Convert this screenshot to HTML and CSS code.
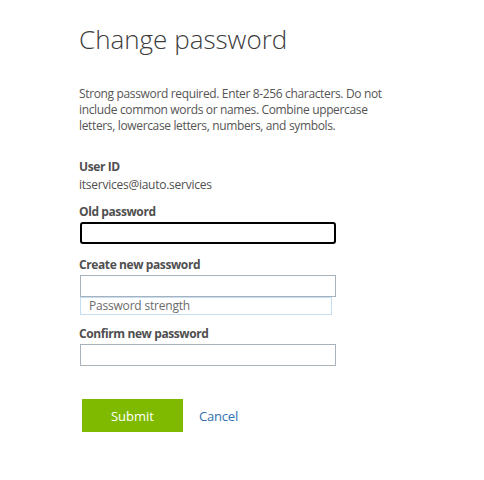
FILE: index.html
```html
<!DOCTYPE html>
<html lang="en">
<head>
<meta charset="utf-8">
<title>Change password</title>
<link rel="stylesheet" href="styles.css">
</head>
<body>
<main class="page">
  <h1 class="title">Change password</h1>
  <p class="desc">Strong password required. Enter 8-256 characters. Do not include common words or names. Combine uppercase letters, lowercase letters, numbers, and symbols.</p>
  <form class="form">
    <div class="label label-first">User ID</div>
    <div class="value">itservices@iauto.services</div>

    <label class="label label-gap-sm" for="old">Old password</label>
    <input class="field field-focus" id="old" type="password">

    <label class="label label-gap-md" for="new">Create new password</label>
    <input class="field" id="new" type="password">
    <div class="strength">Password strength</div>

    <label class="label label-gap-sm" for="confirm">Confirm new password</label>
    <input class="field" id="confirm" type="password">

    <div class="actions">
      <button class="submit" type="button">Submit</button>
      <a class="cancel" href="#">Cancel</a>
    </div>
  </form>
</main>
</body>
</html>
```

FILE: styles.css
```css
html, body {
  margin: 0;
  padding: 0;
  background: #ffffff;
}

body {
  font-family: "Open Sans", "Noto Sans", sans-serif;
  color: #505050;
}

.page {
  padding-left: 79px;
}

.title {
  margin: 21px 0 0 0;
  font-size: 26px;
  line-height: 36px;
  font-weight: 300;
  color: #3c3c3c;
}

.desc {
  margin: 29px 0 0 0;
  width: 325px;
  font-size: 12px;
  line-height: 16px;
  letter-spacing: -0.35px;
  color: #555555;
}

.form {
  display: flex;
  flex-direction: column;
  align-items: flex-start;
}

.label {
  display: block;
  font-size: 12px;
  line-height: 16px;
  font-weight: 700;
  letter-spacing: -0.4px;
  color: #4f4f4f;
}

.label-first { margin-top: 25px; }
.label-gap-sm { margin-top: 11px; }
.label-gap-md { margin-top: 13px; }

.value {
  margin-top: 2px;
  font-size: 12px;
  line-height: 16px;
  letter-spacing: -0.25px;
  color: #505050;
}

.field {
  box-sizing: border-box;
  margin: 2px 0 0 1px;
  width: 256px;
  height: 22px;
  border: 1px solid #a7b2bd;
  border-radius: 0;
  background: #ffffff;
  padding: 0 6px;
  outline: none;
}

.field-focus {
  border: 2px solid #000000;
  border-radius: 3px;
}

.strength {
  box-sizing: border-box;
  margin-left: 1px;
  width: 252px;
  height: 18px;
  border: 1px solid #c4dff3;
  padding-left: 8px;
  font-size: 12px;
  line-height: 16px;
  letter-spacing: -0.2px;
  color: #6b6b6b;
}

.actions {
  margin-top: 33px;
  margin-left: 3px;
  display: flex;
  align-items: center;
  gap: 16px;
}

.submit {
  width: 101px;
  height: 33px;
  border: none;
  background: #7fba00;
  color: #ffffff;
  font-family: "Open Sans", "Noto Sans", sans-serif;
  font-size: 13px;
  padding: 0;
}

.cancel {
  font-size: 13px;
  letter-spacing: -0.2px;
  color: #2f6fb0;
  text-decoration: none;
}
```
